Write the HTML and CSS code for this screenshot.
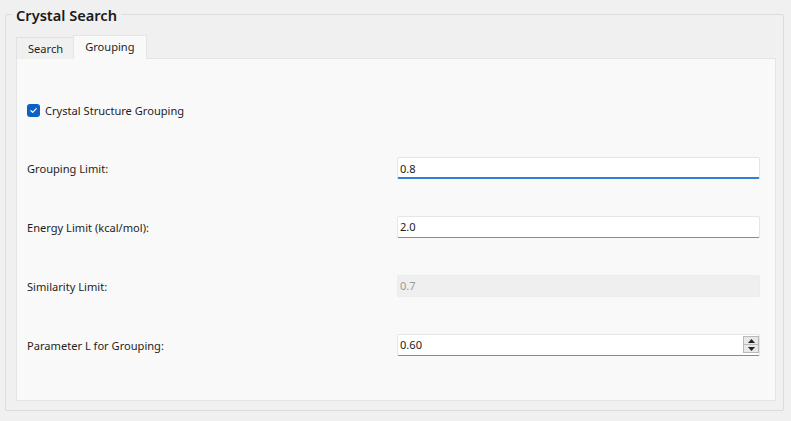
FILE: index.html
```html
<!DOCTYPE html>
<html>
<head>
<meta charset="utf-8">
<link rel="stylesheet" href="styles.css">
</head>
<body>
<div class="group">
  <div class="group-title">Crystal Search</div>
  <div class="tabs">
    <div class="tab">Search</div>
    <div class="tab active">Grouping</div>
  </div>
  <div class="panel">
    <label class="check-row">
      <span class="checkbox"><svg width="9" height="9" viewBox="0 0 9 9"><path d="M1.8 4.6 L3.7 6.4 L7.3 2.6" fill="none" stroke="#fff" stroke-width="1.2" stroke-linecap="round" stroke-linejoin="round"/></svg></span>
      <span class="check-label">Crystal Structure Grouping</span>
    </label>
    <div class="form">
      <div class="row">
        <span class="label">Grouping Limit:</span>
        <div class="input focused">0.8</div>
      </div>
      <div class="row">
        <span class="label">Energy Limit (kcal/mol):</span>
        <div class="input">2.0</div>
      </div>
      <div class="row">
        <span class="label">Similarity Limit:</span>
        <div class="input disabled">0.7</div>
      </div>
      <div class="row">
        <span class="label">Parameter L for Grouping:</span>
        <div class="input spin">0.60
          <div class="spin-btns">
            <div class="spin-btn"><svg width="7" height="4" viewBox="0 0 7 4"><path d="M3.5 0 L7 4 L0 4 Z" fill="#222"/></svg></div>
            <div class="spin-btn"><svg width="7" height="4" viewBox="0 0 7 4"><path d="M0 0 L7 0 L3.5 4 Z" fill="#222"/></svg></div>
          </div>
        </div>
      </div>
    </div>
  </div>
</div>
</body>
</html>
```
FILE: styles.css
```css
* { box-sizing: border-box; }
html, body { margin: 0; padding: 0; }
body {
  width: 791px;
  height: 421px;
  background: #f0f0f0;
  font-family: "Noto Sans", "Open Sans", sans-serif;
  font-size: 11.1px;
  color: #1e1e1e;
  overflow: hidden;
  padding: 14px 7px 0 5px;
}
.group {
  position: relative;
  height: 397px;
  border: 1px solid #dcdcdc;
  border-radius: 2px;
  padding: 20px 7px 0 10px;
}
.group-title {
  position: absolute;
  left: 6px;
  top: -9px;
  padding: 0 4px;
  background: #f0f0f0;
  font-size: 14.6px;
  font-weight: 600;
  line-height: 18px;
  color: #1a1a1a;
}
.tabs {
  display: flex;
  align-items: flex-end;
  height: 24px;
  position: relative;
  z-index: 1;
}
.tab {
  height: 22px;
  padding: 0 10px 0 11px;
  line-height: 21px;
  border: 1px solid #e2e2e2;
  border-bottom: none;
  background: #f0f0f0;
  color: #1e1e1e;
}
.tab.active {
  height: 24px;
  padding: 0 11px;
  line-height: 22px;
  background: #f9f9f9;
  border-color: #e5e5e5;
  margin-left: -1px;
}
.panel {
  height: 343px;
  margin-top: -1px;
  background: #f9f9f9;
  border: 1px solid #e5e5e5;
  padding: 0 15px 0 10px;
}
.check-row {
  display: flex;
  align-items: center;
  gap: 5px;
  margin-top: 44px;
  height: 14px;
}
.checkbox {
  width: 13px;
  height: 13px;
  border-radius: 3px;
  background: #0a62c4;
  display: flex;
  align-items: center;
  justify-content: center;
}
.checkbox svg { display: block; }
.form {
  display: flex;
  flex-direction: column;
  gap: 37px;
  margin-top: 40px;
}
.row {
  display: flex;
  align-items: center;
  height: 22px;
}
.label {
  width: 370px;
  flex: none;
}
.input {
  flex: 1;
  height: 22px;
  position: relative;
  background: #ffffff;
  border: 1px solid #e6e6e6;
  border-bottom: 1px solid #8a8a8a;
  border-radius: 2px;
  padding: 0 0 0 2px;
  line-height: 20px;
  color: #1a1a1a;
}
.input.focused {
  border-bottom: 2px solid #2f7fd6;
  line-height: 21px;
}
.input.disabled {
  background: #efefef;
  border: 1px solid #ececec;
  color: #999999;
}
.spin-btns {
  position: absolute;
  right: 0;
  top: 1px;
  width: 16px;
  height: 17px;
  display: flex;
  flex-direction: column;
  border: 1px solid #b9b9b9;
  background: #e8e8e8;
}
.spin-btn {
  flex: 1;
  display: flex;
  align-items: center;
  justify-content: center;
}
.spin-btn + .spin-btn { border-top: 1px solid #b9b9b9; }
.spin-btn svg { display: block; }
```
